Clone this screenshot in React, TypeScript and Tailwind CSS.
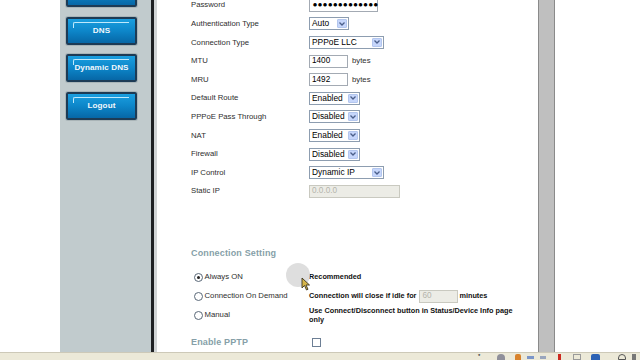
import React from 'react'

const sideButtons = ['', 'DNS', 'Dynamic DNS', 'Logout']

function SideButton({ label }: { label: string }) {
  return (
    <div className="relative h-[28px] w-[71px] rounded-[2px] border-2 border-[#1d3b55] bg-gradient-to-b from-[#1a9fe0] via-[#0d86c9] to-[#0767a6] shadow-[0_0_0_1px_#a9b4b7] flex items-center justify-center">
      <div className="absolute left-[5px] top-[3px] h-[6px] w-[56px] rounded-tl-[2px] border-l border-t border-[#bfe9fc]" />
      {label && (
        <span className="relative mt-[1px] text-[8.1px] font-bold text-[#f2f8fc] tracking-[0.1px]">{label}</span>
      )}
    </div>
  )
}

function Select({ value, width }: { value: string; width: string }) {
  return (
    <div className={`flex h-[13px] items-stretch border border-[#8d9db0] bg-white ${width}`}>
      <span className="flex-1 pl-[2px] text-[8.4px] leading-[11px] text-black">{value}</span>
      <span className="m-[1px] flex w-[10px] items-center justify-center rounded-[1px] bg-[#c6d6fb] border border-[#b3c6ee]">
        <svg width="6" height="4" viewBox="0 0 6 4">
          <path d="M0.5 0.5 L3 3 L5.5 0.5" fill="none" stroke="#4b5f8a" strokeWidth="1.3" />
        </svg>
      </span>
    </div>
  )
}

function TextBox({ value, width, disabled }: { value: string; width: string; disabled?: boolean }) {
  return (
    <div
      className={`flex h-[13px] items-center border pl-[2px] text-[8.2px] font-normal ${width} ${
        disabled ? 'border-[#c9c9c0] bg-[#ececE6] text-[#b4b4ac]' : 'border-[#a3aab3] bg-white text-black'
      }`}
    >
      {value}
    </div>
  )
}

function Row({ label, children }: { label: string; children: React.ReactNode }) {
  return (
    <div className="flex h-[18.6px] items-center">
      <span className="w-[118px] text-[7.75px] text-[#2e2e2e]">{label}</span>
      <div className="flex items-center">{children}</div>
    </div>
  )
}

function Radio({ checked, label }: { checked?: boolean; label: string }) {
  return (
    <div className="flex items-center pl-[3px] font-normal">
      <span className="flex h-[9px] w-[9px] items-center justify-center rounded-full border border-[#5a6878] bg-white">
        {checked && <span className="h-[3px] w-[3px] rounded-full bg-[#222]" />}
      </span>
      <span className="ml-[1.5px] text-[7.75px] text-[#2e2e2e]">{label}</span>
    </div>
  )
}

export default function App() {
  return (
    <div className="relative flex h-[360px] w-[640px] flex-col overflow-hidden bg-white font-['Liberation_Sans',Arial,sans-serif]">
      <div className="flex min-h-0 flex-1">
        <div className="w-[60px] bg-white" />

        {/* Menu lateral */}
        <aside className="w-[91px] bg-[#c1cbcd] pl-[6px]">
          <div className="-mt-[21px] flex flex-col gap-[9.5px]">
            {sideButtons.map((b, i) => (
              <SideButton key={i} label={b} />
            ))}
          </div>
        </aside>
        <div className="w-[3px] bg-[#1f2224]" />
        <div className="w-[3px] bg-[#d2d6d7]" />

        {/* Conteúdo */}
        <main className="w-[381px] pl-[34px]">
          <div className="-mt-[4px]">
            <Row label="Password">
              <div className="flex h-[13px] w-[69px] items-center border border-[#a3aab3] bg-white pl-[3px] text-[4.6px] tracking-[1.05px] text-black font-['DejaVu_Sans',sans-serif]">
                ●●●●●●●●●●●●●
              </div>
            </Row>
            <Row label="Authentication Type">
              <Select value="Auto" width="w-[40px]" />
            </Row>
            <Row label="Connection Type">
              <Select value="PPPoE LLC" width="w-[75px]" />
            </Row>
            <Row label="MTU">
              <TextBox value="1400" width="w-[39px]" />
              <span className="ml-[4px] text-[7.75px] text-[#2e2e2e]">bytes</span>
            </Row>
            <Row label="MRU">
              <TextBox value="1492" width="w-[39px]" />
              <span className="ml-[4px] text-[7.75px] text-[#2e2e2e]">bytes</span>
            </Row>
            <Row label="Default Route">
              <Select value="Enabled" width="w-[51px]" />
            </Row>
            <Row label="PPPoE Pass Through">
              <Select value="Disabled" width="w-[51px]" />
            </Row>
            <Row label="NAT">
              <Select value="Enabled" width="w-[51px]" />
            </Row>
            <Row label="Firewall">
              <Select value="Disabled" width="w-[51px]" />
            </Row>
            <Row label="IP Control">
              <Select value="Dynamic IP" width="w-[75px]" />
            </Row>
            <Row label="Static IP">
              <TextBox value="0.0.0.0" width="w-[91px]" disabled />
            </Row>

            {/* Connection Setting */}
            <div className="mt-[47px] flex h-[12px] items-center text-[9px] font-bold tracking-[0.15px] text-[#869fa8]">
              Connection Setting
            </div>
            <div className="mt-[8px] grid grid-cols-[118px_1fr] text-[7.3px] font-bold text-[#111]">
              <div className="flex h-[19px] items-center">
                <Radio checked label="Always ON" />
              </div>
              <div className="flex h-[19px] items-center">Recommended</div>
              <div className="flex h-[19px] items-center">
                <Radio label="Connection On Demand" />
              </div>
              <div className="flex h-[19px] items-center">
                Connection will close if idle for
                <span className="ml-[3px] mr-[1px]">
                  <TextBox value="60" width="w-[39px]" disabled />
                </span>
                minutes
              </div>
              <div className="flex h-[19px] items-center">
                <Radio label="Manual" />
              </div>
              <div className="flex h-[19px] items-center leading-[9.5px]">
                Use Connect/Disconnect button in Status/Device Info page
                <br />
                only
              </div>
            </div>
            <div className="mt-[12px] flex h-[12px] items-center">
              <span className="w-[118px] text-[9px] font-bold tracking-[0.15px] text-[#869fa8]">Enable PPTP</span>
              <span className="ml-[3px] h-[9px] w-[9px] border border-[#6d7f95] bg-white" />
            </div>
          </div>
        </main>

        <div className="w-[17px] border-x border-[#8a8a8a] bg-[#bfbfbf]" />
        <div className="flex-1 bg-white" />
      </div>

      {/* Barra de status */}
      <div className="flex h-[8px] items-start justify-end gap-[6px] border-t border-[#cdc9b8] bg-[#ece9d8] pr-[4px] pt-[1px]">
        <span className="h-[5px] w-[5px] text-[6px] leading-[5px] text-black">*</span>
        <span className="ml-[8px] h-[6px] w-[8px] rounded-t-full bg-[#8f8f9a]" />
        <span className="ml-[4px] h-[6px] w-[6px] rounded-t-[2px] bg-[#d9822b]" />
        <span className="h-[3px] w-[7px] mt-[2px] bg-[#7b95c8]" />
        <span className="h-[3px] w-[6px] mt-[2px] bg-[#9aa6bd]" />
        <span className="ml-[6px] h-[6px] w-[3px] bg-[#cc2a1f]" />
        <span className="ml-[6px] h-[6px] w-[8px] border border-[#9a9a9a]" />
        <span className="ml-[4px] h-[6px] w-[9px] rounded-t-[2px] bg-[#2d62b5]" />
        <span className="ml-[12px] h-[6px] w-[8px] rounded-t-full border border-[#555]" />
        <span className="h-[6px] w-[4px] bg-[#777]" />
      </div>

      {/* Cursor do screencast */}
      <div className="absolute left-[286px] top-[263px] h-[24px] w-[24px] rounded-full bg-[#d6d6d6]/80" />
      <svg className="absolute left-[301px] top-[277px]" width="10" height="14" viewBox="0 0 10 14">
        <path d="M1 1 L1 11 L3.5 8.5 L5.5 13 L7 12.3 L5 8 L8.5 8 Z" fill="#d6b548" stroke="#3a3320" strokeWidth="0.9" />
      </svg>
    </div>
  )
}
